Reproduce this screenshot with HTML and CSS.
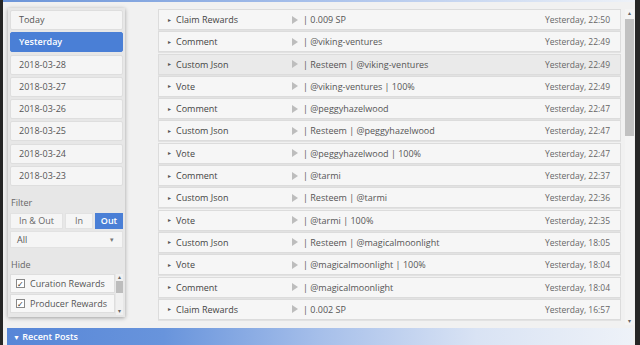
FILE: index.html
```html
<!DOCTYPE html>
<html lang="en">
<head>
  <meta charset="UTF-8" />
  <title>Account history</title>
  <link rel="stylesheet" href="styles.css">
</head>
<body>
  <div class="app">
    <div class="topbar"></div>

    <div class="content">
      <!-- Sidebar -->
      <aside class="sidebar">
        <div class="day">Today</div>
        <div class="day active">Yesterday</div>
        <div class="day">2018-03-28</div>
        <div class="day">2018-03-27</div>
        <div class="day">2018-03-26</div>
        <div class="day">2018-03-25</div>
        <div class="day">2018-03-24</div>
        <div class="day">2018-03-23</div>

        <div class="label">Filter</div>
        <div class="toggle">
          <div class="tbtn wide">In &amp; Out</div>
          <div class="tbtn">In</div>
          <div class="tbtn on">Out</div>
        </div>
        <div class="select">All <span class="arrow">&#9662;</span></div>

        <div class="label hide-label">Hide</div>
        <div class="hide-box">
          <div class="hide-list">
            <div class="hide-item"><span class="check">&#10003;</span>Curation Rewards</div>
            <div class="hide-item"><span class="check">&#10003;</span>Producer Rewards</div>
          </div>
          <div class="mini-scroll">
            <span class="sarrow">&#9652;</span>
            <div class="mini-thumb"></div>
            <span class="sarrow down">&#9662;</span>
          </div>
        </div>
      </aside>

      <!-- History -->
      <main class="history">
        <div class="row"><span class="caret">&#9656;</span><span class="name">Claim Rewards</span><span class="detail"><i class="play"></i>| 0.009 SP</span><span class="time">Yesterday, 22:50</span></div>
        <div class="row"><span class="caret">&#9656;</span><span class="name">Comment</span><span class="detail"><i class="play"></i>| @viking-ventures</span><span class="time">Yesterday, 22:49</span></div>
        <div class="row hover"><span class="caret">&#9656;</span><span class="name">Custom Json</span><span class="detail"><i class="play"></i>| Resteem | @viking-ventures</span><span class="time">Yesterday, 22:49</span></div>
        <div class="row"><span class="caret">&#9656;</span><span class="name">Vote</span><span class="detail"><i class="play"></i>| @viking-ventures | 100%</span><span class="time">Yesterday, 22:49</span></div>
        <div class="row"><span class="caret">&#9656;</span><span class="name">Comment</span><span class="detail"><i class="play"></i>| @peggyhazelwood</span><span class="time">Yesterday, 22:47</span></div>
        <div class="row"><span class="caret">&#9656;</span><span class="name">Custom Json</span><span class="detail"><i class="play"></i>| Resteem | @peggyhazelwood</span><span class="time">Yesterday, 22:47</span></div>
        <div class="row"><span class="caret">&#9656;</span><span class="name">Vote</span><span class="detail"><i class="play"></i>| @peggyhazelwood | 100%</span><span class="time">Yesterday, 22:47</span></div>
        <div class="row"><span class="caret">&#9656;</span><span class="name">Comment</span><span class="detail"><i class="play"></i>| @tarmi</span><span class="time">Yesterday, 22:37</span></div>
        <div class="row"><span class="caret">&#9656;</span><span class="name">Custom Json</span><span class="detail"><i class="play"></i>| Resteem | @tarmi</span><span class="time">Yesterday, 22:36</span></div>
        <div class="row"><span class="caret">&#9656;</span><span class="name">Vote</span><span class="detail"><i class="play"></i>| @tarmi | 100%</span><span class="time">Yesterday, 22:35</span></div>
        <div class="row"><span class="caret">&#9656;</span><span class="name">Custom Json</span><span class="detail"><i class="play"></i>| Resteem | @magicalmoonlight</span><span class="time">Yesterday, 18:05</span></div>
        <div class="row"><span class="caret">&#9656;</span><span class="name">Vote</span><span class="detail"><i class="play"></i>| @magicalmoonlight | 100%</span><span class="time">Yesterday, 18:04</span></div>
        <div class="row"><span class="caret">&#9656;</span><span class="name">Comment</span><span class="detail"><i class="play"></i>| @magicalmoonlight</span><span class="time">Yesterday, 18:04</span></div>
        <div class="row"><span class="caret">&#9656;</span><span class="name">Claim Rewards</span><span class="detail"><i class="play"></i>| 0.002 SP</span><span class="time">Yesterday, 16:57</span></div>
      </main>

      <div class="scrollbar">
        <span class="sarrow">&#9652;</span>
        <div class="thumb"></div>
        <div class="track"></div>
        <span class="sarrow down">&#9662;</span>
      </div>
    </div>

    <div class="panel-head"><span class="tri">&#9660;</span> Recent Posts</div>
  </div>
</body>
</html>
```

FILE: styles.css
```css
* {
  box-sizing: border-box;
}
html, body {
  margin: 0;
  height: 345px;
  overflow: hidden;
}
body {
  background: #262626;
  font-family: 'Open Sans', sans-serif;
  font-size: 9px;
  color: #444;
}

.app {
  margin-left: 3px;
  width: 632px;
  height: 345px;
  background: #f1f1f1;
  display: flex;
  flex-direction: column;
}

.topbar {
  flex-shrink: 0;
  height: 2px;
  background: linear-gradient(90deg, #6b94d8, #a9c1eb 50%, #eef2f8);
}

.content {
  flex-shrink: 0;
  display: flex;
  height: 326px;
  padding: 5px 0 0 5px;
}

/* Sidebar */
.sidebar {
  width: 117px;
  height: 309px;
  margin-top: 1px;
  padding: 2px 2px 0 2px;
  background: #e7e7e7;
  box-shadow: 0 1px 4px rgba(0,0,0,0.35);
}

.day {
  height: 20px;
  margin-bottom: 2.3px;
  padding-left: 8px;
  line-height: 18px;
  background: #f5f5f5;
  border: 1px solid #dedede;
  border-radius: 2px;
  color: #555;
}
.day.active {
  background: #4a7fd6;
  border-color: #4a7fd6;
  color: #fff;
  font-weight: 600;
}

.label {
  margin: 11px 0 4px 1px;
  color: #666;
  line-height: 12px;
}
.label.hide-label {
  margin: 11px 0 3px 1px;
}

.toggle {
  display: flex;
  gap: 2px;
  height: 16px;
  margin-bottom: 2px;
}
.tbtn {
  width: 28px;
  background: #f5f5f5;
  border: 1px solid #e2e2e2;
  text-align: center;
  line-height: 14px;
  color: #666;
}
.tbtn.wide {
  width: 53px;
}
.tbtn.on {
  background: #4a7fd6;
  border-color: #4a7fd6;
  color: #fff;
  font-weight: 600;
}

.select {
  display: flex;
  justify-content: space-between;
  height: 17px;
  padding: 0 8px 0 6px;
  line-height: 16px;
  background: #f5f5f5;
  border: 1px solid #e2e2e2;
  color: #555;
}
.select .arrow {
  font-size: 7px;
  color: #777;
}

.hide-box {
  display: flex;
  height: 41px;
}
.hide-list {
  flex: 1;
  overflow: hidden;
}
.hide-item {
  display: flex;
  align-items: center;
  height: 19px;
  margin-bottom: 1px;
  padding-left: 5px;
  background: #f7f7f7;
  border: 1px solid #dedede;
  color: #555;
}
.check {
  width: 9px;
  height: 9px;
  margin-right: 5px;
  border: 1px solid #888;
  background: #fff;
  font-size: 8px;
  line-height: 7px;
  text-align: center;
  color: #333;
}

.mini-scroll {
  width: 7px;
  margin-left: 1px;
  display: flex;
  flex-direction: column;
  align-items: center;
  background: #f0f0f0;
}
.mini-thumb {
  width: 7px;
  height: 12px;
  background: #bdbdbd;
}
.sarrow {
  font-size: 6px;
  line-height: 7px;
  color: #666;
}
.mini-scroll .down {
  margin-top: auto;
}

/* History */
.history {
  width: 463px;
  margin-left: 33px;
  padding-top: 2px;
}

.row {
  display: grid;
  grid-template-columns: 8px 115px 1fr auto;
  align-items: center;
  height: 21px;
  margin-bottom: 1.3px;
  padding: 0 10px 0 9px;
  background: #f6f6f6;
  border: 1px solid #dcdcdc;
  box-shadow: 0 1px 0 rgba(0,0,0,0.06);
}
.row.hover {
  background: #eaeaea;
}

.caret {
  font-size: 6px;
  color: #555;
}
.name {
  color: #444;
}
.detail {
  display: flex;
  align-items: center;
  color: #555;
}
.play {
  width: 0;
  height: 0;
  margin: 0 5px 0 1px;
  border-top: 4px solid transparent;
  border-bottom: 4px solid transparent;
  border-left: 6px solid #bdbdbd;
}
.time {
  font-size: 8.5px;
  color: #666;
}

.scrollbar {
  width: 9px;
  height: 316px;
  margin: 2px 0 0 4px;
  display: flex;
  flex-direction: column;
  align-items: center;
  background: #f4f4f4;
}
.scrollbar .thumb {
  width: 9px;
  height: 117px;
  margin-top: 2px;
  background: #c1c1c1;
}
.scrollbar .track {
  flex: 1;
}
.scrollbar .sarrow {
  line-height: 8px;
}

/* Bottom panel */
.panel-head {
  flex-shrink: 0;
  height: 20px;
  margin: 0 2px 0 4px;
  padding: 0 6px;
  line-height: 17px;
  background: linear-gradient(90deg, #5786d7 0%, #6894dc 25%, #a6bfea 50%, #d9e3f4 75%, #eef2f8 100%);
  color: #fff;
  font-weight: 600;
}
.panel-head .tri {
  font-size: 7px;
}
```
